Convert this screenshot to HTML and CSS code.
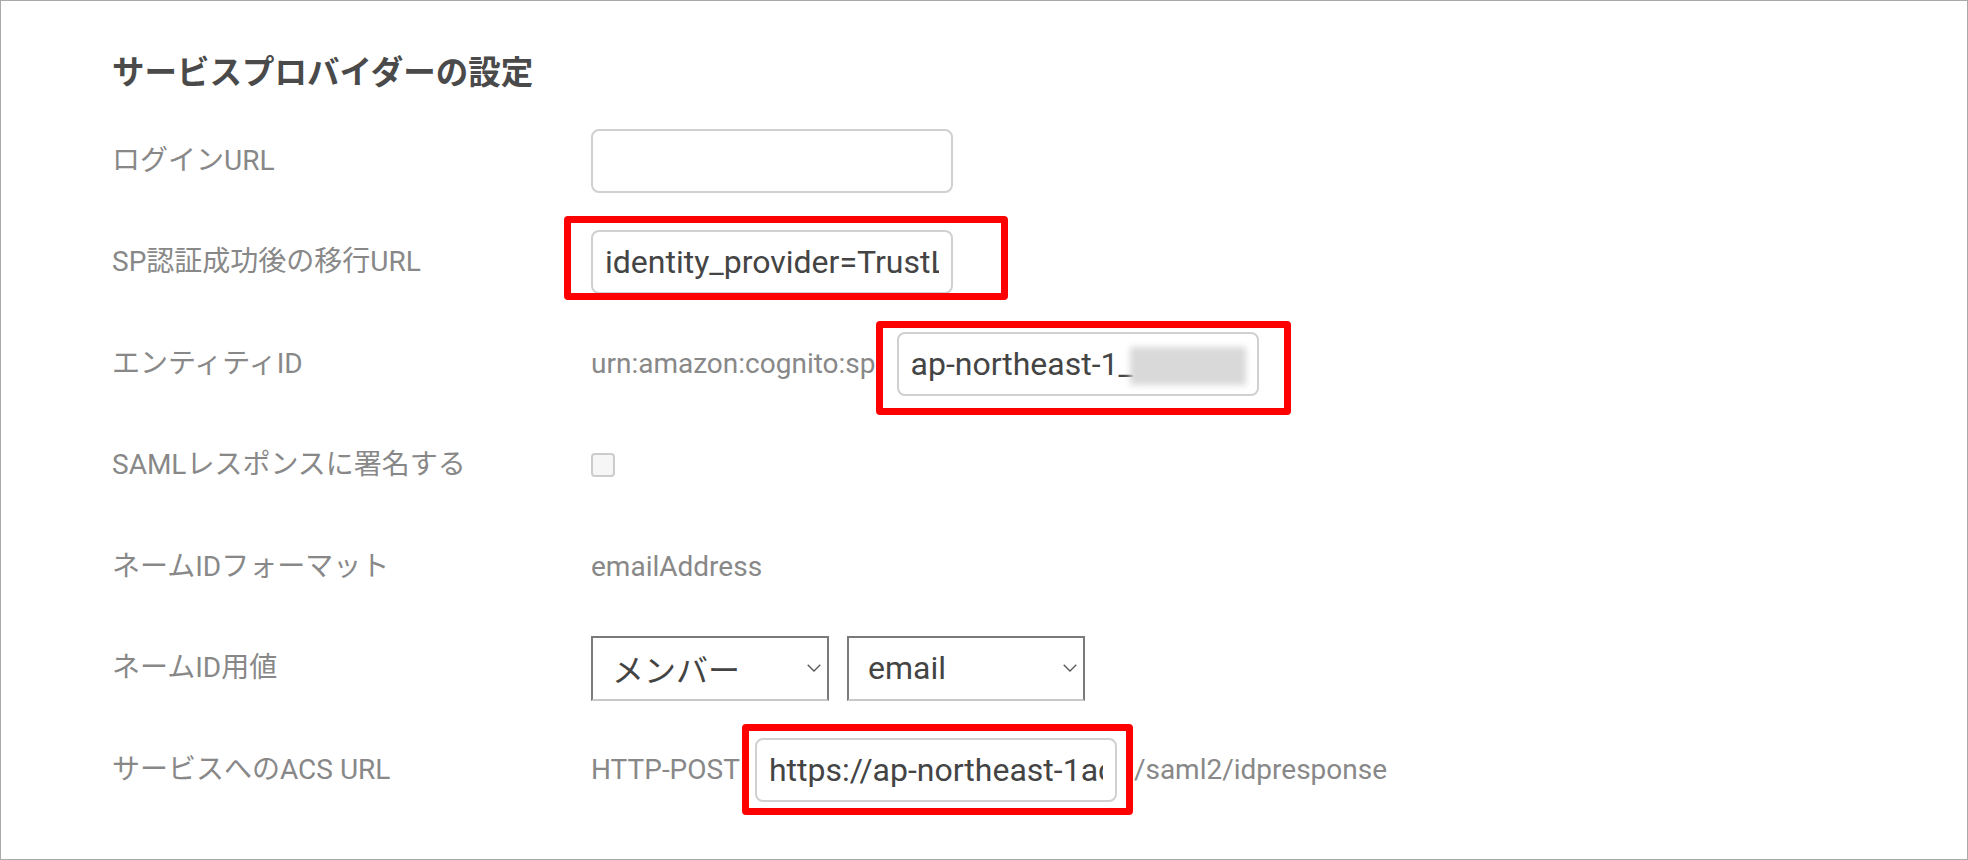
FILE: index.html
```html
<!DOCTYPE html>
<html lang="ja">
<head>
<meta charset="utf-8">
<title>サービスプロバイダーの設定</title>
<link rel="stylesheet" href="styles.css">
</head>
<body>
<div class="frame">
  <div class="header">
    <h2 class="title">サービスプロバイダーの設定</h2>
  </div>
  <div class="rows">
    <div class="row">
      <div class="label">ログインURL</div>
      <div class="value">
        <input class="field" type="text" value="" readonly>
      </div>
    </div>
    <div class="row">
      <div class="label">SP認証成功後の移行URL</div>
      <div class="value">
        <span class="mark mark-sp"><input class="field" type="text" value="identity_provider=TrustLogin" readonly></span>
      </div>
    </div>
    <div class="row">
      <div class="label">エンティティID</div>
      <div class="value">
        <span class="text">urn:amazon:cognito:sp</span>
        <span class="mark mark-entity gap-entity"><input class="field" type="text" value="ap-northeast-1_" readonly><span class="blur"></span></span>
      </div>
    </div>
    <div class="row">
      <div class="label">SAMLレスポンスに署名する</div>
      <div class="value">
        <input class="check" type="checkbox">
      </div>
    </div>
    <div class="row">
      <div class="label">ネームIDフォーマット</div>
      <div class="value">
        <span class="text">emailAddress</span>
      </div>
    </div>
    <div class="row">
      <div class="label">ネームID用値</div>
      <div class="value selects">
        <div class="select">
          <span>メンバー</span>
          <svg class="chev" width="14" height="8" viewBox="0 0 14 8"><polyline points="0.7,0.8 7,7 13.3,0.8" fill="none" stroke="#555" stroke-width="1.3"/></svg>
        </div>
        <div class="select">
          <span>email</span>
          <svg class="chev" width="14" height="8" viewBox="0 0 14 8"><polyline points="0.7,0.8 7,7 13.3,0.8" fill="none" stroke="#555" stroke-width="1.3"/></svg>
        </div>
      </div>
    </div>
    <div class="row">
      <div class="label">サービスへのACS URL</div>
      <div class="value">
        <span class="text">HTTP-POST</span>
        <span class="mark mark-acs gap-acs"><input class="field" type="text" value="https://ap-northeast-1acs.auth.example.com" readonly></span>
        <span class="text gap-after">/saml2/idpresponse</span>
      </div>
    </div>
  </div>
</div>
</body>
</html>
```

FILE: styles.css
```css
html, body {
  margin: 0;
  padding: 0;
  background: #ffffff;
}

body {
  font-family: Roboto, "Noto Sans CJK JP", sans-serif;
}

.frame {
  box-sizing: border-box;
  width: 1968px;
  height: 860px;
  border: 1px solid #aaaaaa;
  padding-left: 111px;
  background: #ffffff;
}

.header {
  box-sizing: border-box;
  height: 109px;
  padding-top: 49px;
}

.title {
  margin: 0;
  font-size: 32.5px;
  line-height: 40px;
  font-weight: 700;
  color: #4a4a4a;
  font-family: "Noto Sans CJK JP", Roboto, sans-serif;
}

.row {
  display: grid;
  grid-template-columns: 479px auto;
  align-items: center;
  height: 101.5px;
}

.label {
  font-size: 28px;
  line-height: 36px;
  color: #888888;
}

.value {
  display: flex;
  align-items: center;
}

.text {
  font-size: 28px;
  line-height: 36px;
  color: #888888;
  white-space: nowrap;
}

.field {
  box-sizing: border-box;
  width: 362px;
  height: 64px;
  margin: 0;
  padding: 0 12px;
  border: 2px solid #d0d0d0;
  border-radius: 8px;
  background: #ffffff;
  font-family: Roboto, "Noto Sans CJK JP", sans-serif;
  font-size: 32px;
  color: #444444;
  outline: none;
  display: block;
}

.mark {
  position: relative;
  display: inline-block;
}

.mark::after {
  content: "";
  position: absolute;
  border: 7px solid #ff0000;
  border-radius: 4px;
  pointer-events: none;
}

.mark-sp::after {
  left: -27px;
  right: -55px;
  top: -14px;
  bottom: -6px;
}

.mark-entity::after {
  left: -21px;
  right: -32px;
  top: -11px;
  bottom: -19px;
}

.mark-acs::after {
  left: -13px;
  right: -16px;
  top: -14px;
  bottom: -13px;
}

.gap-entity {
  margin-left: 21px;
}

.gap-acs {
  margin-left: 15px;
}

.gap-after {
  margin-left: 17px;
}

.blur {
  position: absolute;
  left: 233px;
  top: 15px;
  width: 116px;
  height: 38px;
  background: #d9d9d9;
  filter: blur(3px);
}

.check {
  -webkit-appearance: none;
  appearance: none;
  box-sizing: border-box;
  width: 24px;
  height: 24px;
  margin: 0;
  border: 2px solid #cccccc;
  border-radius: 4px;
  background: #f6f6f6;
}

.selects {
  gap: 18px;
}

.select {
  box-sizing: border-box;
  width: 238px;
  height: 65px;
  display: flex;
  align-items: center;
  justify-content: space-between;
  padding: 0 6px 0 19px;
  border: 2px solid #7a7a7a;
  border-bottom-color: #c8c8c8;
  background: #ffffff;
  font-size: 32px;
  color: #444444;
}

.chev {
  display: block;
}
```
